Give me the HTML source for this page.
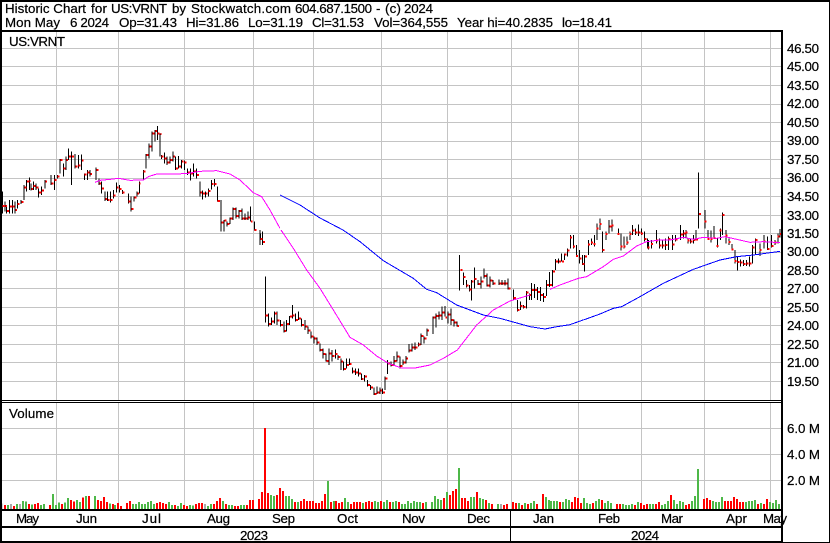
<!DOCTYPE html>
<html><head><meta charset="utf-8"><style>
html,body{margin:0;padding:0;background:#fff;width:830px;height:543px;overflow:hidden}
svg{display:block}
text{font-family:"Liberation Sans",Arial,sans-serif;font-size:13.33px;fill:#000;stroke:#000;stroke-width:.22px}
.b{fill:none;stroke:#000;stroke-width:3}
.r{fill:none;stroke:#f00;stroke-width:6}
.m{fill:none;stroke:#f0f;stroke-width:3}
.u{fill:none;stroke:#00f;stroke-width:3}
.vg{fill:none;stroke:#4db848;stroke-width:6}
.vr{fill:none;stroke:#f00;stroke-width:6}
.vy{fill:none;stroke:#aaa;stroke-width:6}
</style></head><body>
<svg width="830" height="543" viewBox="0 0 830 543" xmlns="http://www.w3.org/2000/svg" shape-rendering="crispEdges">
<rect width="830" height="543" fill="#fff"/>
<!-- grid -->
<path fill="none" stroke="#c4c4c4" stroke-width="1" d="M56.5 32V400M118.5 32V400M184.5 32V400M253.5 32V400M313.5 32V400M381.5 32V400M447.5 32V400M511.5 32V400M578.5 32V400M641.5 32V400M704.5 32V400M770.5 32V400
M56.5 403V510M118.5 403V510M184.5 403V510M253.5 403V510M313.5 403V510M381.5 403V510M447.5 403V510M511.5 403V510M578.5 403V510M641.5 403V510M704.5 403V510M770.5 403V510
M2 48.5H781M2 66.5H781M2 85.5H781M2 104.5H781M2 122.5H781M2 141.5H781M2 159.5H781M2 178.5H781M2 196.5H781M2 215.5H781M2 233.5H781M2 252.5H781M2 270.5H781M2 288.5H781M2 307.5H781M2 325.5H781M2 344.5H781M2 362.5H781M2 381.5H781
M2 428.5H781M2 454.5H781M2 480.5H781"/>

<!-- region 1 -->
<g transform="scale(.33333)">
<path class="b" d="M7 575V640M15 605V635M20 618V640M29 600V640M37 600V640M45 605V640M52 600V625M63 600V612M72 555V600M80 540V575M88 532V570M93 550V572M100 545V570M108 550V570M116 565V592M125 560V585M135 540V565M153 525V555M163 525V570M172 525V535M180 477V520M190 490V530M198 470V510M206 445V480M215 455V555M225 462V505M235 465V505M245 463V510M253 520V540M262 510V540M270 510V530M288 502V540M297 535V555M305 545V580M315 575V603M323 575V603M331 575V607M340 570V595M350 548V578M358 555V578M367 570V582M385 580V610M393 590V635M402 590V605M411 575V590M418 545V580M430 510V540M438 462V505M447 430V475M456 395V455M465 390V425M472 378V420M480 400V470M484 465V477M493 458V490M501 470V495M510 470V490M519 455V485M527 470V510M536 468V505M545 480V505M553 482V510M563 505V525M572 505V542M581 490V530M590 505V535M600 545V590M608 572V598M617 575V592M625 565V590M635 540V568M643 537V560M652 560V605M663 600V695M672 660V695M681 665V680M690 652V672M699 623V660M708 622V655M717 630V655M726 625V660M735 640V660M744 635V660M752 620V665M763 665V692M781 700V720"/>
<path class="r" d="M8 618h7M16 618h5M21 633h6M30 620h6M38 620h6M46 630h5M53 612h5M64 606h6M73 563h6M81 545h6M89 543h3M94 567h5M101 558h6M109 563h6M117 578h7M126 572h6M136 545h5M154 550h6M164 540h6M173 530h6M181 480h6M191 505h5M199 480h5M207 470h6M216 470h6M226 500h6M236 497h6M246 482h5M254 523h6M263 518h6M271 522h5M289 510h6M298 550h5M306 565h6M316 597h5M324 600h5M332 600h6M341 587h6M351 562h5M359 567h6M368 578h5M386 605h5M394 627h6M403 592h6M412 580h5M419 550h3M431 515h5M439 465h6M448 440h6M457 400h6M466 393h5M473 400h5M481 402h3M485 470h6M494 475h5M502 488h6M511 480h6M520 470h5M528 505h6M537 500h6M546 485h5M554 487h6M564 518h6M573 520h6M582 515h6M591 525h6M601 577h5M609 580h6M618 581h5M626 573h6M636 552h5M644 552h6M653 603h7M664 668h6M673 662h6M682 672h6M691 655h6M700 627h6M709 648h6M718 633h6M727 655h6M736 655h6M745 652h5M753 665h5M764 690h6M782 717h6"/>
</g>

<!-- region 2 -->
<g transform="translate(250,230) scale(.33333)">
<path class="b" d="M30 0V45M38 5V45M46 140V278M56 250V290M65 262V285M74 245V280M81 245V285M92 270V290M102 275V308M110 270V305M119 258V285M127 225V265M137 250V275M146 245V270M155 265V290M165 270V300M174 290V312M183 305V325M192 320V340M201 322V345M210 340V365M219 355V385M228 370V395M237 355V405M246 360V395M256 358V385M264 375V390M273 385V420M281 395V422M290 385V415M299 385V405M308 412V430M317 415V435M326 415V440M335 430V450M344 435V455M353 450V470M362 465V480M372 473V495M381 470V492M390 472V492M398 475V492M405 440V480M413 390V432M423 395V410M432 378V408M441 365V395M450 380V415M459 388V405M468 378V400M477 342V368M486 340V365M495 338V360M505 338V350M513 310V345M522 320V340M531 295V318M549 260V312M558 250V292M567 245V268M576 230V270M585 228V260M594 245V280M603 235V285M612 268V290M621 275V290M628 75V182M640 128V165M649 150V172M658 165V185M665 150V212M673 113V175M684 150V165M693 140V175M702 115V145M711 130V170M720 140V172M729 150V165M747 148V165M756 150V165M765 150V167M774 145V178M790 178V208M802 210V245M811 215V240M820 225V235M829 183V235M838 190V210"/>
<path class="r" d="M31 27h6M39 36h6M47 257h7M57 282h6M66 275h6M75 250h6M82 272h6M93 285h6M103 303h5M111 282h6M120 260h6M128 257h6M138 270h6M147 266h6M156 285h6M166 290h6M175 302h6M184 320h6M193 325h6M202 337h6M211 360h6M220 372h6M229 393h6M238 370h6M247 378h6M257 372h5M265 381h6M274 395h5M282 417h6M291 405h6M300 402h5M309 425h6M318 428h6M327 431h6M336 447h5M345 440h6M354 465h6M363 473h6M373 492h6M382 488h6M391 482h5M399 487h6M406 446h6M414 400h6M424 405h6M433 393h6M442 380h6M451 408h6M460 397h6M469 385h5M478 362h6M487 352h6M496 352h6M506 344h5M514 318h6M523 325h6M532 302h5M550 263h6M559 258h6M568 257h6M577 248h6M586 262h5M595 253h6M604 270h6M613 277h6M622 288h5M631 120h6M641 141h6M650 167h6M659 178h5M666 155h5M674 147h6M685 162h6M694 155h6M703 138h6M712 167h6M721 152h6M730 160h6M748 160h6M757 160h6M766 160h6M775 176h6M791 204h7M803 240h6M812 228h6M821 231h6M830 188h6M839 195h5"/>
</g>
<!-- transition -->
<path fill="none" stroke="#000" stroke-width="1" d="M531.5 283V300M534.5 284V298M537.5 287V300M540.5 287V301M543.5 293V302M546.5 280V296M549.5 272V287"/>
<path fill="none" stroke="#f00" stroke-width="2" d="M532 290h2M535 290h2M538 292h2M541 295h2M544 297h2M547 285h2M550 285h2"/>

<!-- region 3 -->
<g transform="translate(550,160) scale(.33333)">
<path class="b" d="M8 330V380M17 297V330M26 295V310M35 280V305M43 280V300M52 265V290M62 225V265M71 225V265M80 255V290M89 270V310M98 285V315M104 285V335M115 240V285M124 235V255M133 225V260M141 190V240M150 175V210M158 215V278M168 215V240M177 180V220M186 178V215M205 205V225M213 220V272M222 230V265M231 230V255M240 215V240M248 195V225M257 205V225M265 193V228M274 205V225M283 215V245M292 235V265M296 240V268M305 240V265M320 210V250M329 235V265M338 240V265M347 235V270M356 230V270M368 225V270M377 225V245M392 195V240M400 210V235M408 210V235M414 235V250M422 235V250M430 225V250M438 210V240M445 38V205M465 150V205M474 210V240M483 212V248M492 198V235M502 235V262M511 205V240M518 158V225M528 210V250M537 235V255M546 252V272M555 270V310M563 290V332M572 298V320M581 300V318M590 300V318M598 290V320M607 255V310M616 235V285M630 250V288M642 225V265M653 230V270M665 225V262M675 240V255M684 220V250M690 207V232"/>
<path class="r" d="M9 335h6M18 305h6M27 305h6M36 305h6M44 283h6M53 272h6M60 233h6M69 260h6M78 288h6M88 296h6M97 312h6M105 290h6M114 254h6M123 248h6M131 252h6M140 206h6M149 192h6M158 270h6M167 222h6M178 200h6M184 197h6M202 222h6M212 260h6M221 260h6M230 248h6M239 222h6M247 212h6M256 218h6M266 217h6M273 220h6M284 237h6M293 263h6M303 252h6M318 242h6M328 257h6M337 256h6M346 255h6M355 237h6M367 254h6M376 238h6M393 224h6M401 220h6M407 218h6M412 242h6M421 245h6M430 240h6M438 238h6M447 162h6M464 185h6M473 237h6M482 237h6M491 234h6M500 258h6M509 212h6M518 165h6M527 226h6M536 246h6M545 268h6M554 303h6M563 306h6M572 308h6M581 312h6M590 310h6M599 310h6M608 263h6M617 240h6M628 270h6M641 245h6M652 267h6M664 258h6M673 247h6M682 230h6M690 222h6"/>
</g>

<!-- MA lines -->
<g transform="scale(.33333)">
<polyline class="m" points="285,547 300,541 340,537 355,535 390,541 430,540 445,530 470,522 530,522 565,520 600,514 650,512 690,522 720,540 760,578 785,590 810,630 840,685"/>
<polyline class="u" points="840,585 900,615 960,654 1029,690"/>
</g>
<g transform="translate(250,230) scale(.33333)">
<polyline class="m" points="93,0 130,55 170,120 210,175 250,240 300,322 340,345 380,378 415,400 455,414 495,414 540,405 580,385 622,360 680,285 730,240 780,213 840,195"/>
<polyline class="u" points="279,0 330,35 400,92 490,145 530,178 560,188 620,225 700,255 750,265 840,290 885,297 915,291 960,284 999,270"/>
</g>
<g transform="translate(550,160) scale(.33333)">
<polyline class="m" points="0,388 30,375 85,355 110,350 160,320 190,298 220,288 260,258 290,245 330,240 360,240 400,232 430,238 460,232 500,235 525,230 560,238 600,247 640,245 690,248"/>
<polyline class="u" points="100,480 150,462 190,445 215,440 270,410 340,370 430,328 510,300 560,290 610,285 690,274"/>
</g>

<!-- Volume -->
<g transform="translate(0,400) scale(.33333)">
<path class="vy" d="M5 327V310M33 327V312M60 327V312M615 327V312"/>
<path class="vr" d="M15 327V315M42 327V318M87 327V312M105 327V312M114 327V309M150 327V315M186 327V312M213 327V300M222 327V305M249 327V292M267 327V288M294 327V300M303 327V303M312 327V291M321 327V306M339 327V312M354 327V309M363 327V318M381 327V309M390 327V303M471 327V309M480 327V306M489 327V309M498 327V312M525 327V315M552 327V315M561 327V318M588 327V312M597 327V309M606 327V309M642 327V312M651 327V303M660 327V294M678 327V312M705 327V318M714 327V318M741 327V315M750 327V300M759 327V300M777 327V297M786 327V276M795 327V84M804 327V279"/>
<path class="vg" d="M24 327V315M51 327V312M69 327V303M78 327V305M96 327V313M123 327V315M132 327V312M159 327V282M168 327V315M177 327V308M195 327V308M204 327V294M231 327V300M240 327V306M258 327V288M285 327V288M330 327V310M345 327V315M399 327V312M408 327V312M417 327V306M426 327V312M435 327V312M444 327V306M453 327V303M462 327V312M507 327V306M516 327V315M534 327V318M543 327V309M570 327V315M579 327V317M624 327V318M633 327V312M669 327V303M687 327V315M696 327V315M723 327V315M732 327V315M813 327V285M822 327V288"/>
</g>
<g transform="translate(270,400) scale(.33333)">
<path class="vy" d="M693 327V312"/>
<path class="vr" d="M21 327V285M30 327V264M39 327V273M75 327V306M93 327V303M102 327V297M111 327V303M120 327V303M129 327V303M138 327V309M147 327V309M156 327V303M165 327V282M183 327V306M198 327V303M207 327V309M216 327V306M243 327V312M252 327V306M261 327V306M270 327V306M288 327V306M297 327V303M306 327V306M333 327V303M360 327V306M387 327V306M459 327V309M522 327V294M540 327V285M549 327V273M558 327V267M576 327V294M585 327V294M594 327V303M621 327V276M648 327V300M666 327V312M702 327V315M711 327V312M729 327V306M738 327V309M756 327V315M774 327V312M801 327V312M819 327V282"/>
<path class="vg" d="M3 327V285M12 327V288M48 327V288M57 327V288M66 327V297M84 327V306M174 327V243M192 327V303M225 327V294M234 327V306M279 327V309M315 327V303M324 327V306M342 327V306M351 327V300M369 327V306M378 327V303M396 327V312M405 327V312M414 327V303M423 327V309M432 327V303M441 327V306M450 327V306M468 327V306M486 327V306M495 327V288M504 327V297M513 327V300M531 327V276M567 327V204M603 327V291M612 327V291M630 327V294M639 327V297M657 327V309M684 327V312M747 327V309M765 327V309M783 327V309M792 327V303M828 327V291M837 327V300"/>
</g>
<g transform="translate(550,400) scale(.33333)">
<path class="vr" d="M30 327V306M66 327V306M75 327V291M84 327V294M93 327V309M129 327V309M156 327V300M201 327V312M210 327V312M255 327V315M273 327V309M282 327V315M291 327V312M318 327V312M327 327V306M363 327V285M408 327V315M417 327V312M462 327V297M471 327V294M480 327V300M525 327V303M534 327V303M543 327V303M552 327V291M561 327V297M570 327V306M579 327V306M624 327V312M642 327V312M651 327V297"/>
<path class="vg" d="M3 327V303M12 327V303M21 327V303M39 327V306M48 327V297M57 327V300M102 327V294M111 327V309M120 327V312M138 327V303M147 327V297M165 327V309M174 327V303M183 327V309M219 327V312M228 327V315M237 327V315M246 327V312M264 327V306M300 327V312M309 327V312M336 327V315M345 327V312M354 327V303M372 327V300M381 327V312M390 327V303M399 327V306M426 327V303M435 327V288M444 327V207M489 327V303M498 327V306M507 327V306M516 327V291M588 327V306M597 327V303M606 327V303M615 327V300M633 327V309M660 327V306M669 327V309M678 327V300M687 327V312"/>
</g>

<!-- frame -->
<g fill="#000">
<rect x="0" y="0" width="830" height="2"/>
<rect x="0" y="30" width="783" height="2"/>
<rect x="0" y="0" width="2" height="543"/>
<rect x="781" y="30" width="2" height="513"/>
<rect x="829" y="0" width="1" height="543"/>
<rect x="0" y="400" width="781" height="1"/>
<rect x="0" y="402" width="781" height="1"/>
<rect x="0" y="509" width="781" height="2"/>
<rect x="0" y="526" width="781" height="2"/>
<rect x="0" y="541" width="783" height="2"/>
<rect x="783" y="542" width="47" height="1"/>
<rect x="510" y="510" width="1" height="31"/>
</g>

<g>
<!-- header -->
<text x="5" y="13" textLength="81">Historic Chart</text>
<text x="91" y="13" textLength="16">for</text>
<text x="111" y="13" textLength="56">US:VRNT</text>
<text x="172" y="13" textLength="14">by</text>
<text x="191" y="13" textLength="100">Stockwatch.com</text>
<text x="295" y="13" textLength="77">604.687.1500</text>
<text x="376" y="13">-</text>
<text x="385" y="13" textLength="16">(c)</text>
<text x="404" y="13" textLength="29">2024</text>
<text x="5" y="27" textLength="55">Mon May</text>
<text x="70" y="27" textLength="39">6 2024</text>
<text x="119" y="27" textLength="58">Op=31.43</text>
<text x="186" y="27" textLength="53">Hi=31.86</text>
<text x="248" y="27" textLength="55">Lo=31.19</text>
<text x="312" y="27" textLength="52">Cl=31.53</text>
<text x="374" y="27" textLength="74">Vol=364,555</text>
<text x="457" y="27" textLength="96">Year hi=40.2835</text>
<text x="562" y="27" textLength="50">lo=18.41</text>
<text x="9" y="46" textLength="56">US:VRNT</text>
<text x="9" y="418" textLength="45">Volume</text>
<!-- price axis -->
<text x="787" y="53" textLength="32">46.50</text>
<text x="787" y="71" textLength="32">45.00</text>
<text x="787" y="90" textLength="32">43.50</text>
<text x="787" y="108" textLength="32">42.00</text>
<text x="787" y="127" textLength="32">40.50</text>
<text x="787" y="145" textLength="32">39.00</text>
<text x="787" y="164" textLength="32">37.50</text>
<text x="787" y="182" textLength="32">36.00</text>
<text x="787" y="201" textLength="32">34.50</text>
<text x="787" y="220" textLength="32">33.00</text>
<text x="787" y="238" textLength="32">31.50</text>
<text x="787" y="256" textLength="32">30.00</text>
<text x="787" y="275" textLength="32">28.50</text>
<text x="787" y="293" textLength="32">27.00</text>
<text x="787" y="312" textLength="32">25.50</text>
<text x="787" y="330" textLength="32">24.00</text>
<text x="787" y="349" textLength="32">22.50</text>
<text x="787" y="367" textLength="32">21.00</text>
<text x="787" y="386" textLength="32">19.50</text>
<!-- volume axis -->
<text x="787" y="433" textLength="33">6.0 M</text>
<text x="787" y="459" textLength="33">4.0 M</text>
<text x="787" y="485" textLength="33">2.0 M</text>
<!-- months -->
<text x="16" y="523" textLength="23">May</text>
<text x="76" y="523" textLength="21">Jun</text>
<text x="142" y="523" textLength="19">Jul</text>
<text x="207" y="523" textLength="23">Aug</text>
<text x="272" y="523" textLength="23">Sep</text>
<text x="337" y="523" textLength="21">Oct</text>
<text x="402" y="523" textLength="23">Nov</text>
<text x="467" y="523" textLength="23">Dec</text>
<text x="533" y="523" textLength="21">Jan</text>
<text x="598" y="523" textLength="22">Feb</text>
<text x="661" y="523" textLength="22">Mar</text>
<text x="726" y="523" textLength="21">Apr</text>
<text x="763" y="523" textLength="24">May</text>
<text x="240" y="540" textLength="28">2023</text>
<text x="631" y="540" textLength="28">2024</text>
</g>
</svg>
</body></html>
